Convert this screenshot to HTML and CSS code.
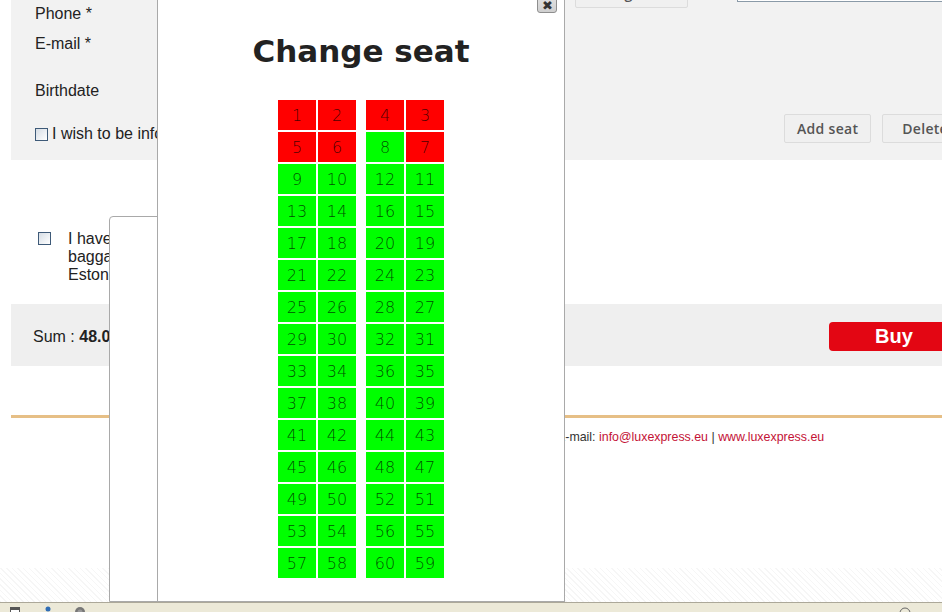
FILE: index.html
```html
<!DOCTYPE html>
<html lang="en">
<head>
    <meta charset="utf-8">
    <meta name="viewport" content="width=device-width, initial-scale=1">
    <title>Lux Express - Passenger details</title>
    <link rel="stylesheet" href="styles.css">
</head>
<body>
    <div class="page">
        <div class="form-box">
            <div class="form-left">
                <div class="field field-phone">Phone *</div>
                <div class="field field-email">E-mail *</div>
                <div class="field field-birth">Birthdate</div>
                <label class="field field-news"><span class="checkbox"></span>I wish to be informed</label>
            </div>
            <div class="form-right">
                <div class="top-row">
                    <button class="btn btn-top">Change seat</button>
                    <input class="text-input" type="text">
                </div>
                <div class="actions">
                    <button class="btn">Add seat</button>
                    <button class="btn btn-wide">Delete seat</button>
                </div>
            </div>
        </div>

        <div class="terms">
            <span class="checkbox"></span>
            <p class="terms-text">I have read the rules<br>baggage<br>Estonia</p>
        </div>

        <div class="sum-bar">
            <span class="sum">Sum : <b>48.00 €</b></span>
            <button class="buy">Buy</button>
        </div>

        <div class="footer">
            <p class="footer-text">E-mail: <a href="#">info@luxexpress.eu</a> | <a href="#">www.luxexpress.eu</a></p>
        </div>

        <div class="bg-strip"></div>
    </div>

    <!-- dialog left open behind the seat picker -->
    <div class="dialog dialog-back"></div>

    <div class="dialog dialog-seats">
        <button class="dialog-close" aria-label="Close">&#10006;</button>
        <h1 class="dialog-title">Change seat</h1>
        <div class="seat-map">
            <div class="seat-block">
                <div class="seat taken">1</div><div class="seat taken">2</div>
                <div class="seat taken">5</div><div class="seat taken">6</div>
                <div class="seat">9</div><div class="seat">10</div>
                <div class="seat">13</div><div class="seat">14</div>
                <div class="seat">17</div><div class="seat">18</div>
                <div class="seat">21</div><div class="seat">22</div>
                <div class="seat">25</div><div class="seat">26</div>
                <div class="seat">29</div><div class="seat">30</div>
                <div class="seat">33</div><div class="seat">34</div>
                <div class="seat">37</div><div class="seat">38</div>
                <div class="seat">41</div><div class="seat">42</div>
                <div class="seat">45</div><div class="seat">46</div>
                <div class="seat">49</div><div class="seat">50</div>
                <div class="seat">53</div><div class="seat">54</div>
                <div class="seat">57</div><div class="seat">58</div>
            </div>
            <div class="seat-block">
                <div class="seat taken">4</div><div class="seat taken">3</div>
                <div class="seat">8</div><div class="seat taken">7</div>
                <div class="seat">12</div><div class="seat">11</div>
                <div class="seat">16</div><div class="seat">15</div>
                <div class="seat">20</div><div class="seat">19</div>
                <div class="seat">24</div><div class="seat">23</div>
                <div class="seat">28</div><div class="seat">27</div>
                <div class="seat">32</div><div class="seat">31</div>
                <div class="seat">36</div><div class="seat">35</div>
                <div class="seat">40</div><div class="seat">39</div>
                <div class="seat">44</div><div class="seat">43</div>
                <div class="seat">48</div><div class="seat">47</div>
                <div class="seat">52</div><div class="seat">51</div>
                <div class="seat">56</div><div class="seat">55</div>
                <div class="seat">60</div><div class="seat">59</div>
            </div>
        </div>
    </div>

    <div class="status-bar">
        <svg class="sb-icon sb-page" width="12" height="12" viewBox="0 0 12 12"><rect x="1.5" y="1.5" width="9" height="9" fill="#fff" stroke="#555"/><rect x="2" y="2" width="8" height="2" fill="#555"/></svg>
        <svg class="sb-icon sb-user" width="12" height="12" viewBox="0 0 12 12"><circle cx="6" cy="3" r="2.5" fill="#2f6db5"/><path d="M2 11 C2 6 10 6 10 11 Z" fill="#2f6db5"/></svg>
        <svg class="sb-icon sb-globe" width="12" height="12" viewBox="0 0 12 12"><circle cx="6" cy="6" r="5" fill="#777"/><circle cx="6" cy="6" r="2.5" fill="#999"/></svg>
        <svg class="sb-icon sb-zoom" width="14" height="12" viewBox="0 0 14 12"><circle cx="7" cy="7" r="5" fill="none" stroke="#666"/></svg>
    </div>
</body>
</html>
```

FILE: styles.css
```css
:root {
    --panel-bg: #f2f2f2;
    --sum-bg: #efefef;
    --text: #222222;
    --border: #a9a9a9;
    --free: #00ff00;
    --taken: #ff0000;
    --lux-red: #e30613;
    --link: #c41236;
    --gold: #e6bf86;
}

html, body {
    margin: 0;
    height: 100%;
    overflow: hidden;
}

body {
    font-family: "Liberation Sans", Arial, sans-serif;
    font-size: 16px;
    color: var(--text);
    background: #ffffff;
}

.page {
    width: 948px;
    margin-left: 11px;
}

/* passenger form */
.form-box {
    display: flex;
    height: 160px;
    background: var(--panel-bg);
}

.form-left {
    width: 564px;
    flex-shrink: 0;
    box-sizing: border-box;
    padding: 5px 0 0 24px;
}

.field {
    display: flex;
    align-items: center;
    line-height: 18px;
    white-space: nowrap;
}

.field-email { margin-top: 12px; }
.field-birth { margin-top: 29px; }
.field-news { margin-top: 25px; }

.checkbox {
    display: inline-block;
    width: 11px;
    height: 11px;
    border: 1px solid #3e5a78;
    background: linear-gradient(135deg, #d6dde5, #ffffff);
    margin-right: 4px;
    flex-shrink: 0;
}

.form-right {
    flex: 1;
    display: flex;
    flex-direction: column;
}

.top-row {
    display: flex;
    align-items: flex-start;
    margin-top: -22px;
}

.btn {
    font-family: "Open Sans", sans-serif;
    font-size: 14px;
    font-weight: 600;
    letter-spacing: 0.3px;
    color: #555555;
    background: #f0f0f0;
    border: 1px solid #dcdcdc;
    border-radius: 2px;
    height: 29px;
    padding: 0 12px;
    white-space: nowrap;
}

.btn-wide {
    padding: 0 19px;
}

.btn-top {
    width: 113px;
    height: 30px;
}

.text-input {
    flex: 1;
    height: 24px;
    box-sizing: border-box;
    margin-left: 49px;
    border: 1px solid #8a9aa8;
    background: #ffffff;
}

.actions {
    display: flex;
    gap: 11px;
    margin: 106px 0 0 209px;
}

/* terms */
.terms {
    display: flex;
    align-items: flex-start;
    height: 144px;
    box-sizing: border-box;
    padding: 72px 0 0 27px;
}

.terms .checkbox {
    margin-right: 17px;
}

.terms-text {
    margin: -2px 0 0;
    line-height: 18px;
    white-space: nowrap;
}

/* sum and buy */
.sum-bar {
    display: flex;
    align-items: center;
    justify-content: space-between;
    height: 62px;
    padding-left: 22px;
    background: var(--sum-bg);
}

.sum {
    margin-top: 3px;
}

.buy {
    width: 130px;
    height: 29px;
    margin-top: 3px;
    border: none;
    border-radius: 4px;
    background: var(--lux-red);
    color: #ffffff;
    font-family: "Liberation Sans", Arial, sans-serif;
    font-size: 20px;
    font-weight: bold;
}

/* footer */
.footer {
    margin-top: 49px;
    border-top: 3px solid var(--gold);
    padding-top: 12px;
}

.footer-text {
    margin: 0;
    padding-left: 546px;
    font-size: 12.4px;
    line-height: 14px;
    color: #333333;
    white-space: nowrap;
}

.footer-text a {
    color: var(--link);
    text-decoration: none;
}

.bg-strip {
    margin: 124px 0 0 -11px;
    width: 960px;
    height: 34px;
    background: repeating-linear-gradient(45deg, #f6f6f6 0 1px, #ffffff 1px 4px);
}

/* dialogs */
.dialog {
    position: fixed;
    bottom: 10px;
    box-sizing: border-box;
    background: #ffffff;
    border: 1px solid var(--border);
}

.dialog-back {
    top: 216px;
    left: 109px;
    width: 420px;
    border-radius: 4px 4px 0 0;
}

.dialog-seats {
    top: -2px;
    left: 157px;
    width: 408px;
    padding-top: 34px;
}

.dialog-close {
    position: absolute;
    top: -6px;
    right: 7px;
    width: 20px;
    height: 20px;
    padding: 5px 0 0;
    border: 1px solid #8e8e8e;
    border-radius: 3px;
    background: linear-gradient(#e6e6e6, #cfcfcf);
    color: #333333;
    font-size: 13px;
    line-height: 14px;
}

.dialog-title {
    margin: 0 0 31px;
    font-family: "DejaVu Sans", Verdana, sans-serif;
    font-size: 31px;
    line-height: 36px;
    font-weight: bold;
    color: #222222;
    text-align: center;
}

.seat-map {
    display: flex;
    justify-content: center;
    gap: 10px;
}

.seat-block {
    display: grid;
    grid-template-columns: 38px 38px;
    grid-auto-rows: 30px;
    gap: 2px;
}

.seat {
    display: flex;
    align-items: center;
    justify-content: center;
    background: var(--free);
    color: rgba(0, 0, 0, 0.72);
    font-family: "DejaVu Sans", sans-serif;
    font-weight: 200;
    font-size: 16px;
}

.seat.taken {
    background: var(--taken);
}

/* browser status bar */
.status-bar {
    position: fixed;
    left: 0;
    right: 0;
    bottom: 0;
    height: 9px;
    display: flex;
    align-items: flex-start;
    background: #ece9d8;
    border-top: 1px solid #aca899;
    overflow: hidden;
}

.sb-icon {
    margin-top: 3px;
}

.sb-page { margin-left: 9px; }
.sb-user { margin-left: 21px; }
.sb-globe { margin-left: 20px; }
.sb-zoom { margin-left: auto; margin-right: 30px; }
```
